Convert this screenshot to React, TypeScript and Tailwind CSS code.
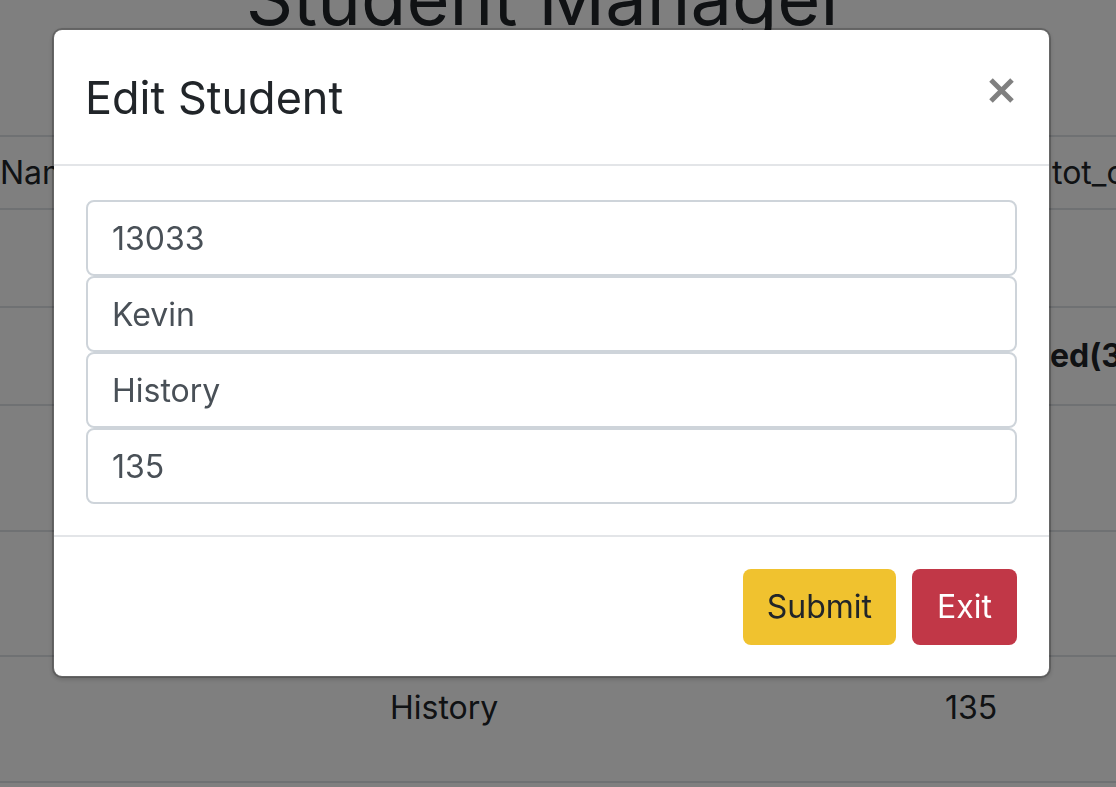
import React from "react";

function CloseIcon() {
  return (
    <svg width="25" height="25" viewBox="0 0 25 25" className="block">
      <path d="M2 2 L23 23 M23 2 L2 23" stroke="#808080" strokeWidth="5" strokeLinecap="butt" />
    </svg>
  );
}

export default function App() {
  return (
    <div className="relative h-[787px] w-[1116px] overflow-hidden bg-white font-['Inter','Liberation_Sans',sans-serif] text-[#212529]">
      {/* page behind the modal */}
      <div className="flex flex-col">
        <h1 className="mt-[-50px] h-[96px] pr-[22px] text-center text-[74px] font-normal leading-[96px]">
          Student Manager
        </h1>
        <div className="ml-[-24px] mt-[89px] w-[1240px] border-t-2 border-[#dee2e6] text-[32px] leading-[48px]">
          <div className="grid h-[73px] grid-cols-[391px_554px_105px_1fr] items-center border-b-2 border-[#dee2e6]">
            <div className="pl-[24px]">Name</div>
            <div className="pl-[24px]">Department</div>
            <div className="pl-[24px]"></div>
            <div className="pl-[26px]">tot_cred</div>
          </div>
          <div className="grid h-[98px] grid-cols-[391px_554px_105px_1fr] items-center border-b-2 border-[#dee2e6]">
            <div className="pl-[24px]"></div>
          </div>
          <div className="grid h-[98px] grid-cols-[391px_554px_105px_1fr] items-center border-b-2 border-[#dee2e6]">
            <div className="pl-[24px]"></div>
            <div className="pl-[24px]"></div>
            <div className="pl-[24px]"></div>
            <div className="pl-[24px] font-bold">ed(3)</div>
          </div>
          <div className="grid h-[126px] grid-cols-[391px_554px_105px_1fr] border-b-2 border-[#dee2e6]">
            <div className="pl-[24px]"></div>
          </div>
          <div className="grid h-[125px] grid-cols-[391px_554px_105px_1fr] border-b-2 border-[#dee2e6]">
            <div className="pl-[24px]"></div>
          </div>
          <div className="grid h-[126px] grid-cols-[391px_554px_105px_1fr] border-b-2 border-[#dee2e6] pt-[27px]">
            <div className="pl-[24px]"></div>
            <div className="pl-[23px]">History</div>
            <div className="pl-[24px]">135</div>
            <div className="pl-[24px]"></div>
          </div>
        </div>
      </div>

      {/* backdrop + modal */}
      <div className="fixed inset-0 bg-black/50 pl-[52px] pt-[28px]">
        <div className="w-[999px] rounded-[10px] border-2 border-black/20 bg-white bg-clip-padding shadow-[0_2px_4px_rgba(0,0,0,0.15)]">
          <div className="flex items-start justify-between border-b-2 border-[#e3e5e8] px-[32px] pb-[32px] pt-[33px]">
            <h4 className="ml-[-1px] text-[45px] font-normal leading-[69px] text-[#212529]">Edit Student</h4>
            <div className="mr-[3px] mt-[15px]">
              <CloseIcon />
            </div>
          </div>
          <div className="flex flex-col px-[32px] pb-[31px] pt-[34px]">
            {["13033", "Kevin", "History", "135"].map((v) => (
              <input
                key={v}
                defaultValue={v}
                className="h-[76px] w-full rounded-[8px] border-2 border-[#ced4da] bg-white px-[24px] text-[32px] text-[#495057] outline-none"
              />
            ))}
          </div>
          <div className="flex justify-end gap-[16px] border-t-2 border-[#e3e5e8] px-[32px] pb-[31px] pt-[32px]">
            <button className="h-[76px] rounded-[8px] bg-[#f0c22f] px-[24px] text-[32px] text-[#212529]">
              Submit
            </button>
            <button className="h-[76px] rounded-[8px] bg-[#c13747] px-[25px] text-[32px] text-white">
              Exit
            </button>
          </div>
        </div>
      </div>
    </div>
  );
}
